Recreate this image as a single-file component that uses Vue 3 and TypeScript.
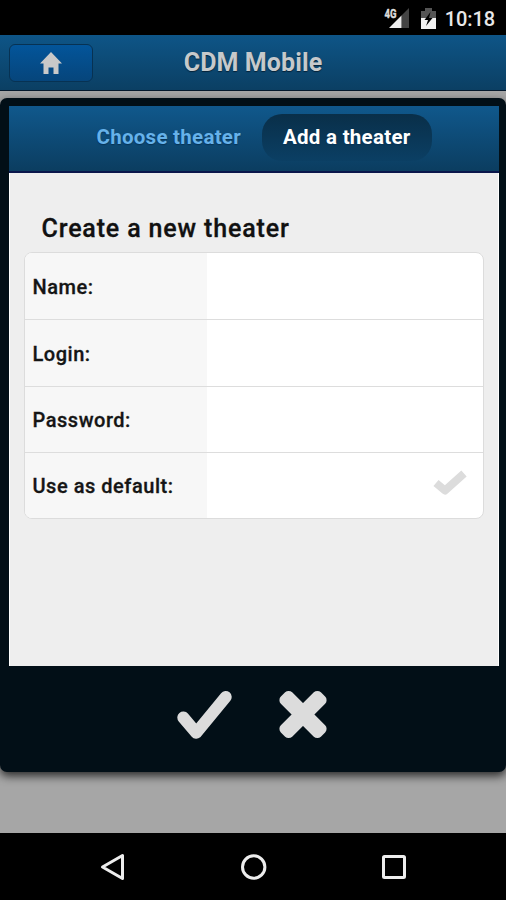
<script setup lang="ts">
interface Field {
  id: string
  label: string
  toggle?: boolean
}

const fields: Field[] = [
  { id: 'name', label: 'Name:' },
  { id: 'login', label: 'Login:' },
  { id: 'password', label: 'Password:' },
  { id: 'default', label: 'Use as default:', toggle: true },
]
</script>

<template>
  <div class="screen">
    <div class="status">
      <svg class="signal" width="26" height="24" viewBox="0 0 26 24">
        <text class="net" x="0.500" y="10.500" textLength="12" lengthAdjust="spacingAndGlyphs">4G</text>
        <path d="M17.500 8.500 25 1v20h-7.500z" fill="#444" />
        <path d="M5 21 17.500 8.500V21z" fill="#eee" />
      </svg>
      <svg class="battery" width="15" height="21" viewBox="0 0 15 21">
        <path d="M0 3h4V0h7v3h4v8H0z" fill="#555" />
        <path d="M0 10h15v11H0z" fill="#f2f2f2" />
        <path d="M9.500 4 3.500 12H7l-2 6 6.500-8H8z" fill="#000" />
      </svg>
      <span class="clock">10:18</span>
    </div>

    <header class="header">
      <button class="home" aria-label="Home">
        <svg width="22" height="22" viewBox="0 0 22 22">
          <path d="M11 0 22 11.500h-3.500V22h-5v-6.500h-5V22h-5V11.500H0z" fill="#c9c9c9" />
        </svg>
      </button>
      <h1 class="title"><span>CDM Mobile</span></h1>
    </header>

    <main class="backdrop">
      <section class="dialog">
        <nav class="tabs">
          <a class="tab">Choose theater</a>
          <a class="tab active">Add a theater</a>
        </nav>
        <div class="content">
          <h2 class="heading">Create a new theater</h2>
          <div class="form">
            <div v-for="field in fields" :key="field.id" class="row">
              <div class="label">{{ field.label }}</div>
              <div class="value">
                <svg v-if="field.toggle" width="36" height="28" viewBox="0 0 36 28">
                  <path d="M4 13 13 20.500 32 3.500" fill="none" stroke="#dcdcdc" stroke-width="8" stroke-linejoin="round" />
                </svg>
              </div>
            </div>
          </div>
        </div>
        <footer class="actions">
          <svg width="58" height="54" viewBox="0 0 58 54">
            <path d="M7.300 28.500 20.300 43.800 49.700 8" fill="none" stroke="#dcdcdc" stroke-width="12" stroke-linecap="round" stroke-linejoin="round" />
          </svg>
          <svg width="50" height="50" viewBox="0 0 50 50">
            <g fill="#dcdcdc">
              <rect x="-3.300" y="17.500" width="56.600" height="16" rx="5" transform="rotate(45 25 25.500)" />
              <rect x="-3.300" y="17.500" width="56.600" height="16" rx="5" transform="rotate(-45 25 25.500)" />
            </g>
          </svg>
        </footer>
      </section>
    </main>

    <div class="navbar">
      <svg width="28" height="30" viewBox="0 0 28 30">
        <path d="M3.500 15 23.500 3.500v23z" />
      </svg>
      <svg width="28" height="30" viewBox="0 0 28 30">
        <circle cx="13.700" cy="15" r="11.200" />
      </svg>
      <svg width="28" height="30" viewBox="0 0 28 30">
        <rect x="3.500" y="4.500" width="21" height="21" rx="1" />
      </svg>
    </div>
  </div>
</template>

<style>
body {
  margin: 0;
  background: #000;
}
</style>

<style scoped>
.screen {
  width: 506px;
  height: 900px;
  display: flex;
  flex-direction: column;
  overflow: hidden;
  background: #000;
  font-family: Roboto, "Liberation Sans", sans-serif;
}

.status {
  height: 35px;
  box-sizing: border-box;
  padding: 7px 11px 0 0;
  display: flex;
  justify-content: flex-end;
  align-items: flex-start;
}

.signal {
  margin-right: 11px;
}

.battery {
  margin: 1px 9px 0 0;
}

.net {
  font-size: 12px;
  font-weight: 700;
  fill: #ddd;
  stroke: #ddd;
  stroke-width: 0.4px;
}

.clock {
  font-size: 20px;
  font-weight: 500;
  line-height: 25px;
  letter-spacing: -0.1px;
  color: #e8e8e8;
}

.header {
  height: 56px;
  flex: none;
  box-sizing: border-box;
  padding: 0 9px;
  display: grid;
  grid-template-columns: 84px 1fr 84px;
  align-items: center;
  background: linear-gradient(#0e5587, #0b3f63);
  border-bottom: 1px solid #05192c;
}

.home {
  height: 38px;
  width: 84px;
  padding: 0;
  display: flex;
  align-items: center;
  justify-content: center;
  background: linear-gradient(#03559a, #06457b);
  border: 1px solid #073253;
  border-radius: 6px;
}

.title {
  margin: 0;
  text-align: center;
  font-size: 25px;
  line-height: 30px;
  font-weight: 700;
  letter-spacing: 0.1px;
  color: #c6c9cb;
  text-shadow: 0 1px 1px #052238;
}

.backdrop {
  height: 742px;
  flex: none;
  box-sizing: border-box;
  padding-top: 7px;
  background: #a6a6a6;
}

.dialog {
  height: 674px;
  box-sizing: border-box;
  padding: 8px 7px 0 9px;
  display: flex;
  flex-direction: column;
  background: #020f17;
  border-radius: 7px;
  box-shadow: 0 4px 10px rgba(0, 0, 0, 0.75);
}

.tabs {
  height: 67px;
  flex: none;
  box-sizing: border-box;
  padding: 8px 0 0 67px;
  display: flex;
  align-items: flex-start;
  background: linear-gradient(#10588c, #0b3d60);
  border-bottom: 2px solid #0a164b;
}

.tab {
  height: 47px;
  box-sizing: border-box;
  padding: 0 20.500px;
  font-size: 20.500px;
  line-height: 46px;
  font-weight: 700;
  letter-spacing: 0.27px;
  color: #66b2ea;
  border-radius: 20px;
  text-shadow: 0 1px 1px #073356;
  white-space: nowrap;
}

.tab.active {
  padding: 0 21.500px;
  color: #fff;
  background: linear-gradient(#092f49, #0b3f64);
}

.content {
  height: 493px;
  flex: none;
  box-sizing: border-box;
  padding: 41px 14px 0 14px;
  background: #eee;
  border-right: 1px solid #fff;
  border-left: 1px solid #fff;
}

.heading {
  margin: 0 0 8px 17.500px;
  font-size: 25px;
  line-height: 30px;
  font-weight: 500;
  letter-spacing: 0.85px;
  color: #111;
  -webkit-text-stroke: 0.3px #111;
  white-space: nowrap;
}

.form {
  height: 267px;
  box-sizing: border-box;
  display: grid;
  grid-template-rows: 67px 67px 66px 65px;
  background: #fff;
  border: 1px solid #dcdcdc;
  border-radius: 8px;
  overflow: hidden;
}

.row {
  display: grid;
  grid-template-columns: 182px 1fr;
  border-bottom: 1px solid #ddd;
}

.row:last-child {
  border-bottom: 0;
}

.label {
  padding: 1px 0 0 7.500px;
  display: flex;
  align-items: center;
  background: #f7f7f7;
  font-size: 20px;
  font-weight: 500;
  letter-spacing: 0.53px;
  color: #151515;
  -webkit-text-stroke: 0.3px #151515;
}

.value {
  display: flex;
  align-items: center;
  justify-content: flex-end;
  padding: 0 15px 4px 0;
}

.actions {
  display: flex;
  padding: 23px 0 0 167px;
  gap: 44px;
}

.navbar {
  height: 67px;
  padding-left: 1px;
  display: flex;
  justify-content: center;
  align-items: center;
  gap: 112.500px;
}

.navbar svg {
  fill: none;
  stroke: #ededed;
  stroke-width: 3px;
  stroke-linejoin: round;
}
</style>
